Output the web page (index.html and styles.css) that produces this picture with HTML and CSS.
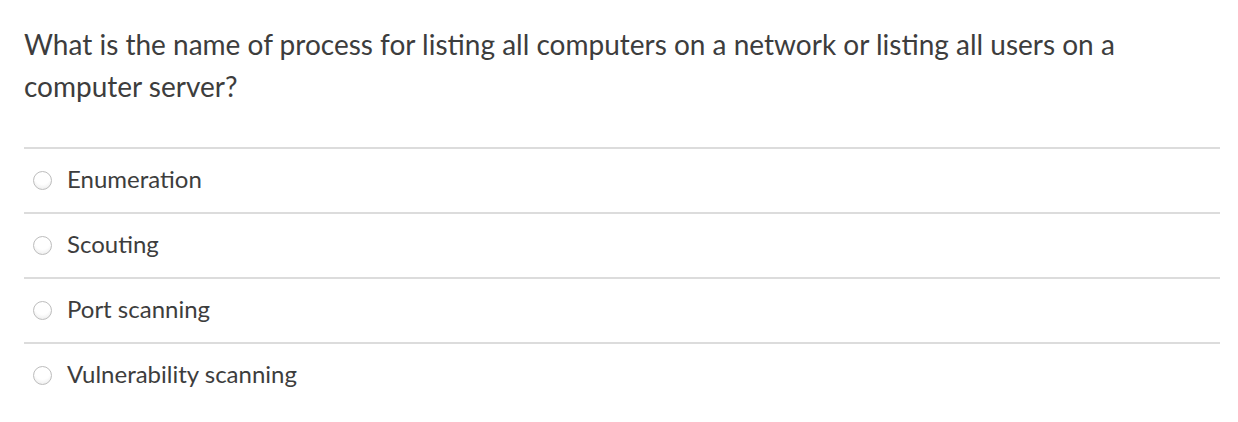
FILE: index.html
```html
<!DOCTYPE html>
<html lang="en">
<head>
<meta charset="utf-8">
<link rel="stylesheet" href="styles.css">
</head>
<body>
<div class="quiz">
  <div class="question">What is the name of process for listing all computers on a network or listing all users on a computer server?</div>
  <div class="answers">
    <label class="answer"><span class="radio"></span><span class="text">Enumeration</span></label>
    <label class="answer"><span class="radio"></span><span class="text">Scouting</span></label>
    <label class="answer"><span class="radio"></span><span class="text">Port scanning</span></label>
    <label class="answer"><span class="radio"></span><span class="text">Vulnerability scanning</span></label>
  </div>
</div>
</body>
</html>
```
FILE: styles.css
```css
html, body {
  margin: 0;
  padding: 0;
  background: #fff;
}
body {
  font-family: Lato, "Open Sans", sans-serif;
  color: #3d3d3d;
}
.quiz {
  width: 1196px;
  padding: 23px 0 0 24px;
}
.question {
  font-size: 28px;
  line-height: 42px;
}
.answers {
  margin-top: 40px;
}
.answer {
  display: flex;
  align-items: center;
  height: 63px;
  border-top: 2px solid #dcdcdc;
}
.radio {
  width: 19px;
  height: 19px;
  box-sizing: border-box;
  border: 1px solid #bdbdbd;
  border-radius: 50%;
  background: radial-gradient(circle at 50% 30%, #ffffff 50%, #e6e6e6 100%);
  margin-left: 9px;
  margin-right: 15px;
  flex: none;
}
.text {
  font-size: 24px;
  line-height: 30px;
  margin-top: -4px;
}
```
